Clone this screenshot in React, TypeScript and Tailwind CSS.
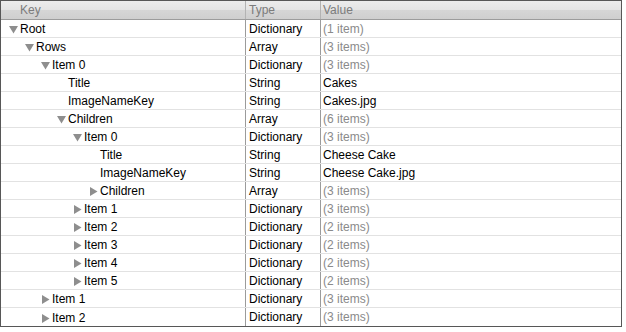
type Row = {
  key: string;
  level: number;
  toggle?: "open" | "closed";
  type: string;
  value: string;
  muted?: boolean;
};

const rows: Row[] = [
  { key: "Root", level: 0, toggle: "open", type: "Dictionary", value: "(1 item)", muted: true },
  { key: "Rows", level: 1, toggle: "open", type: "Array", value: "(3 items)", muted: true },
  { key: "Item 0", level: 2, toggle: "open", type: "Dictionary", value: "(3 items)", muted: true },
  { key: "Title", level: 3, type: "String", value: "Cakes" },
  { key: "ImageNameKey", level: 3, type: "String", value: "Cakes.jpg" },
  { key: "Children", level: 3, toggle: "open", type: "Array", value: "(6 items)", muted: true },
  { key: "Item 0", level: 4, toggle: "open", type: "Dictionary", value: "(3 items)", muted: true },
  { key: "Title", level: 5, type: "String", value: "Cheese Cake" },
  { key: "ImageNameKey", level: 5, type: "String", value: "Cheese Cake.jpg" },
  { key: "Children", level: 5, toggle: "closed", type: "Array", value: "(3 items)", muted: true },
  { key: "Item 1", level: 4, toggle: "closed", type: "Dictionary", value: "(3 items)", muted: true },
  { key: "Item 2", level: 4, toggle: "closed", type: "Dictionary", value: "(2 items)", muted: true },
  { key: "Item 3", level: 4, toggle: "closed", type: "Dictionary", value: "(2 items)", muted: true },
  { key: "Item 4", level: 4, toggle: "closed", type: "Dictionary", value: "(2 items)", muted: true },
  { key: "Item 5", level: 4, toggle: "closed", type: "Dictionary", value: "(2 items)", muted: true },
  { key: "Item 1", level: 2, toggle: "closed", type: "Dictionary", value: "(3 items)", muted: true },
  { key: "Item 2", level: 2, toggle: "closed", type: "Dictionary", value: "(3 items)", muted: true },
];

function Disclosure({ state }: { state: "open" | "closed" }) {
  return (
    <svg width="9" height="9" viewBox="0 0 9 9" className="shrink-0">
      {state === "open" ? (
        <polygon points="0,1 9,1 4.5,8.5" fill="#8e8e8e" />
      ) : (
        <polygon points="1,0 8.5,4.5 1,9" fill="#8e8e8e" />
      )}
    </svg>
  );
}

function App() {
  return (
    <div className="w-[626px] h-[332px] bg-white">
      <div
        className="w-[622px] h-[327px] border border-[#575757] bg-white overflow-hidden text-[12px] text-black"
        style={{ fontFamily: '"Liberation Sans", Arial, sans-serif' }}
      >
        {/* Header */}
        <div className="flex h-[19px] border-b border-[#9c9c9c] bg-[linear-gradient(to_bottom,#ececec_0%,#e4e4e4_50%,#d6d6d6_50%,#cfcfcf_100%)] text-[#7c7c7c]">
          <div className="w-[245px] border-r border-[#b3b3b3] pl-[19px] leading-[19px]">Key</div>
          <div className="w-[75px] border-r border-[#b3b3b3] pl-[3px] leading-[19px]">Type</div>
          <div className="flex-1 pl-[2px] leading-[19px]">Value</div>
        </div>

        {/* Rows */}
        {rows.map((row, i) => (
          <div key={i} className="flex h-[18px] border-b border-[#e2e2e2] last:border-b-0">
            <div className="w-[245px] border-r border-[#9b9b9b] flex items-center pt-[2px]">
              <div className="flex items-center" style={{ paddingLeft: 8 + row.level * 16 }}>
                {row.toggle ? <Disclosure state={row.toggle} /> : <span className="w-[9px]" />}
                <span className="pl-[2px] leading-[15px]">{row.key}</span>
              </div>
            </div>
            <div className="w-[75px] border-r border-[#9b9b9b] pl-[3px] pt-[2px] leading-[15px]">{row.type}</div>
            <div
              className={`flex-1 pl-[2px] pt-[2px] leading-[15px] ${row.muted ? "text-[#8a8a8a]" : "text-black"}`}
            >
              {row.value}
            </div>
          </div>
        ))}
      </div>
    </div>
  );
}

export default App;
